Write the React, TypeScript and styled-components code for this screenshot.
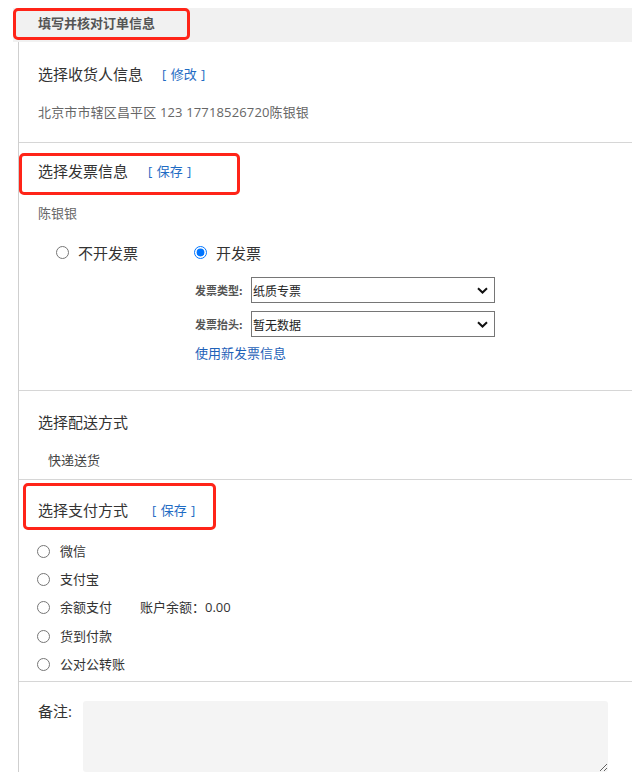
import React from 'react'
import styled, { createGlobalStyle } from 'styled-components'

const GlobalStyle = createGlobalStyle`
  html, body {
    margin: 0;
    padding: 0;
    background: #fff;
  }
  body {
    font-family: "Open Sans", "Noto Sans CJK SC", sans-serif;
    color: #333;
  }
  * {
    box-sizing: border-box;
  }
`

const Page = styled.div`
  width: 632px;
  padding-top: 8px;
  overflow: hidden;
`

const Header = styled.div`
  margin-left: 13px;
  height: 34px;
  background: #f1f1f1;
`

const HeaderTitle = styled.div`
  width: 177px;
  height: 32px;
  padding-left: 22px;
  border: 3px solid #ff2418;
  border-radius: 5px;
  font-size: 13px;
  font-weight: bold;
  line-height: 25px;
  color: #555;
`

const Content = styled.div`
  margin-left: 18px;
  border-left: 1px solid #cfcfcf;
`

const Section = styled.div<{ $pad: string }>`
  padding: ${(p) => p.$pad};
  border-bottom: 1px solid #d6d6d6;
`

const LastSection = styled.div`
  padding: 19px 0 0 19px;
  display: flex;
  align-items: flex-start;
`

const TitleRow = styled.div`
  display: flex;
  align-items: center;
  height: 30px;
  padding-bottom: 2px;
  font-size: 15px;
  color: #333;
`

const MarkedTitle = styled.div<{ $w: number; $h: number; $left: number; $top: number; $pl: number; $pt: number }>`
  display: flex;
  align-items: flex-start;
  width: ${(p) => p.$w}px;
  height: ${(p) => p.$h}px;
  margin: ${(p) => p.$top}px 0 0 ${(p) => p.$left}px;
  padding: ${(p) => p.$pt}px 0 0 ${(p) => p.$pl}px;
  border: 3px solid #ff2418;
  border-radius: 5px;
  font-size: 15px;
  line-height: 30px;
  color: #333;
`

const Action = styled.span<{ $gap: number }>`
  margin-left: ${(p) => p.$gap}px;
  font-size: 13px;
  color: #1f6cc4;
  cursor: pointer;
  word-spacing: 1px;
`

const Info = styled.div<{ $top: number; $left?: number; $color?: string; $spacing?: number }>`
  margin-top: ${(p) => p.$top}px;
  padding-left: ${(p) => p.$left || 0}px;
  height: 20px;
  line-height: 19px;
  font-size: 13px;
  letter-spacing: ${(p) => p.$spacing || 0}px;
  color: ${(p) => p.$color || '#666'};
`

const InvoiceChoice = styled.div`
  display: flex;
  align-items: center;
  height: 24px;
  margin-top: 16px;
  padding-left: 37px;
`

const ChoiceLabel = styled.label<{ $gap?: number }>`
  display: flex;
  align-items: center;
  margin-right: ${(p) => p.$gap || 0}px;
  font-size: 15px;
  color: #333;
  cursor: pointer;
`

const Radio = styled.input.attrs({ type: 'radio' })<{ $gap: number }>`
  width: 13px;
  height: 13px;
  margin: 0 ${(p) => p.$gap}px 0 0;
`

const InvoiceForm = styled.div`
  margin-top: 13px;
  padding-left: 176px;
  display: flex;
  flex-direction: column;
  gap: 8px;
`

const FieldRow = styled.div`
  display: flex;
  align-items: center;
  height: 26px;
`

const FieldLabel = styled.span`
  width: 56px;
  font-family: "Noto Sans CJK SC", sans-serif;
  font-size: 11px;
  font-weight: bold;
  color: #555;
`

const SelectBox = styled.div`
  position: relative;
  width: 244px;
  height: 26px;
`

const Select = styled.select`
  width: 100%;
  height: 100%;
  padding: 0 24px 0 1px;
  border: 1px solid #767676;
  border-radius: 0;
  background: #fff;
  appearance: none;
  font-family: "Noto Sans CJK SC", sans-serif;
  font-size: 12px;
  color: #222;
`

const Chevron = styled.svg`
  position: absolute;
  right: 7px;
  top: 10px;
  width: 11px;
  height: 7px;
  pointer-events: none;
`

const NewInvoiceLink = styled.a`
  display: block;
  margin-top: -1px;
  height: 20px;
  line-height: 19px;
  font-size: 13px;
  color: #1f62b8;
  text-decoration: none;
  cursor: pointer;
`

const PayList = styled.div`
  margin-top: 7px;
  padding-left: 18px;
`

const PayRow = styled.label`
  display: flex;
  align-items: center;
  height: 28.3px;
  font-size: 13px;
  color: #333;
  cursor: pointer;
`

const PayName = styled.span`
  margin-top: -2px;
`

const Balance = styled.span`
  margin-left: 28px;
`

const RemarkLabel = styled.span`
  width: 45px;
  line-height: 20px;
  font-size: 15px;
  color: #333;
`

const Remark = styled.textarea`
  width: 525px;
  height: 71px;
  border: none;
  border-radius: 3px;
  background: #f4f4f4;
  outline: none;
`

const payments = ['微信', '支付宝', '余额支付', '货到付款', '公对公转账']

const InvoiceSelect: React.FC<{ options: string[] }> = ({ options }) => (
  <SelectBox>
    <Select defaultValue={options[0]}>
      {options.map((o) => (
        <option key={o} value={o}>
          {o}
        </option>
      ))}
    </Select>
    <Chevron viewBox="0 0 11 7">
      <path d="M1 1.2l4.5 4.3L10 1.2" fill="none" stroke="#111" strokeWidth="2" />
    </Chevron>
  </SelectBox>
)

const App: React.FC = () => {
  return (
    <>
      <GlobalStyle />
      <Page>
        <Header>
          <HeaderTitle>填写并核对订单信息</HeaderTitle>
        </Header>
        <Content>
          <Section $pad="17px 0 19px 19px">
            <TitleRow>
              选择收货人信息
              <Action $gap={19}>[ 修改 ]</Action>
            </TitleRow>
            <Info $top={14} $spacing={0.15}>
              北京市市辖区昌平区 123 17718526720陈银银
            </Info>
          </Section>

          <Section $pad="0 0 26px 0">
            <MarkedTitle $w={221} $h={42} $left={0} $top={10} $pl={16} $pt={0}>
              选择发票信息
              <Action $gap={20}>[ 保存 ]</Action>
            </MarkedTitle>
            <Info $top={9} $left={19}>陈银银</Info>
            <InvoiceChoice>
              <ChoiceLabel $gap={56}>
                <Radio name="invoice" $gap={9} />
                不开发票
              </ChoiceLabel>
              <ChoiceLabel>
                <Radio name="invoice" $gap={9} defaultChecked />
                开发票
              </ChoiceLabel>
            </InvoiceChoice>
            <InvoiceForm>
              <FieldRow>
                <FieldLabel>发票类型:</FieldLabel>
                <InvoiceSelect options={['纸质专票', '普通发票']} />
              </FieldRow>
              <FieldRow>
                <FieldLabel>发票抬头:</FieldLabel>
                <InvoiceSelect options={['暂无数据']} />
              </FieldRow>
              <NewInvoiceLink>使用新发票信息</NewInvoiceLink>
            </InvoiceForm>
          </Section>

          <Section $pad="16px 0 8px 19px">
            <TitleRow>选择配送方式</TitleRow>
            <Info $top={14} $left={10} $color="#444">快递送货</Info>
          </Section>

          <Section $pad="0 0 3px 0">
            <MarkedTitle $w={193} $h={47} $left={4} $top={3} $pl={12} $pt={9}>
              选择支付方式
              <Action $gap={24}>[ 保存 ]</Action>
            </MarkedTitle>
            <PayList>
              {payments.map((name) => (
                <PayRow key={name}>
                  <Radio name="pay" $gap={10} />
                  <PayName>
                    {name}
                    {name === '余额支付' && <Balance>账户余额：0.00</Balance>}
                  </PayName>
                </PayRow>
              ))}
            </PayList>
          </Section>

          <LastSection>
            <RemarkLabel>备注:</RemarkLabel>
            <Remark />
          </LastSection>
        </Content>
      </Page>
    </>
  )
}

export default App
